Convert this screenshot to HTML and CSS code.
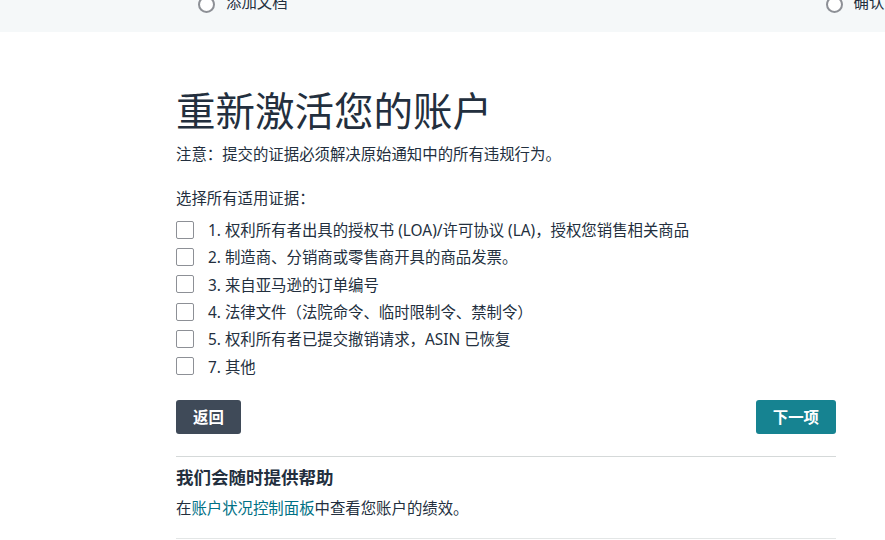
FILE: index.html
```html
<!DOCTYPE html>
<html lang="zh-CN">
<head>
    <meta charset="UTF-8">
    <meta name="viewport" content="width=device-width, initial-scale=1.0">
    <title>重新激活您的账户</title>
    <link rel="stylesheet" href="styles.css">
</head>
<body>
    <div class="steps">
        <div class="steps-row">
            <div class="step step-docs"><span class="radio"></span> 添加文档</div>
            <div class="step step-confirm"><span class="radio"></span> 确认</div>
        </div>
    </div>

    <div class="main">
        <h1>重新激活您的账户</h1>
        <p class="note">注意：提交的证据必须解决原始通知中的所有违规行为。</p>

        <p class="prompt">选择所有适用证据：</p>
        <div class="options">
            <label class="option"><input type="checkbox"><span class="box"></span> 1. 权利所有者出具的授权书 (LOA)/许可协议 (LA)，授权您销售相关商品</label>
            <label class="option"><input type="checkbox"><span class="box"></span> 2. 制造商、分销商或零售商开具的商品发票。</label>
            <label class="option"><input type="checkbox"><span class="box"></span> 3. 来自亚马逊的订单编号</label>
            <label class="option"><input type="checkbox"><span class="box"></span> 4. 法律文件（法院命令、临时限制令、禁制令）</label>
            <label class="option"><input type="checkbox"><span class="box"></span> 5. 权利所有者已提交撤销请求，ASIN 已恢复</label>
            <label class="option"><input type="checkbox"><span class="box"></span> 7. 其他</label>
        </div>

        <div class="actions">
            <button class="btn btn-back">返回</button>
            <button class="btn btn-next">下一项</button>
        </div>

        <div class="help">
            <h2>我们会随时提供帮助</h2>
            <p>在<a href="#">账户状况控制面板</a>中查看您账户的绩效。</p>
        </div>
    </div>
</body>
</html>
```

FILE: styles.css
```css
body {
    margin: 0;
    font-family: "Noto Sans", "Noto Sans CJK SC", sans-serif;
    color: #232f3e;
    background: #ffffff;
}
.steps {
    height: 32px;
    overflow: hidden;
    background: #f5f8f9;
}
.steps-row {
    display: flex;
    margin-top: -9px;
    padding-left: 198px;
    white-space: nowrap;
}
.step {
    display: flex;
    flex-shrink: 0;
    align-items: center;
    gap: 11px;
    height: 20px;
    font-size: 15.4px;
    color: #232f3e;
}
.step-confirm {
    margin-left: 538px;
}
.radio {
    flex-shrink: 0;
    width: 13px;
    height: 13px;
    margin-top: 6px;
    border: 2px solid #8d9096;
    border-radius: 50%;
    background: #ffffff;
}
.main {
    width: 660px;
    margin-left: 176px;
    padding-top: 57px;
    padding-bottom: 18px;
    border-bottom: 1px solid #e3e6e6;
}
h1 {
    margin: 0;
    font-size: 39.5px;
    line-height: 45px;
    font-weight: 400;
}
.note {
    margin: 10px 0 0;
    font-size: 15.4px;
    line-height: 22px;
}
.prompt {
    margin: 22px 0 0;
    font-size: 15.4px;
    line-height: 22px;
}
.options {
    display: flex;
    flex-direction: column;
    margin-top: 6px;
}
.option {
    display: flex;
    align-items: center;
    height: 27.3px;
    font-size: 15.4px;
    cursor: pointer;
}
.option input {
    display: none;
}
.box {
    width: 16px;
    height: 16px;
    border: 1px solid #8d9096;
    border-radius: 2px;
    margin-right: 14px;
    background: #ffffff;
}
.actions {
    display: flex;
    justify-content: space-between;
    margin-top: 20px;
    padding-bottom: 22px;
    border-bottom: 1px solid #d5d9d9;
}
.btn {
    height: 34px;
    padding: 0 17px;
    border: none;
    border-radius: 3px;
    font-family: inherit;
    font-size: 15.4px;
    font-weight: 700;
    color: #ffffff;
    cursor: pointer;
}
.btn-back {
    background: #3f4a58;
}
.btn-next {
    background: #168391;
}
.help h2 {
    margin: 8px 0 0;
    font-size: 17.5px;
    line-height: 24px;
    font-weight: 700;
}
.help p {
    margin: 9px 0 0;
    font-size: 15.4px;
    line-height: 22px;
}
.help a {
    color: #007185;
    text-decoration: none;
}
```
